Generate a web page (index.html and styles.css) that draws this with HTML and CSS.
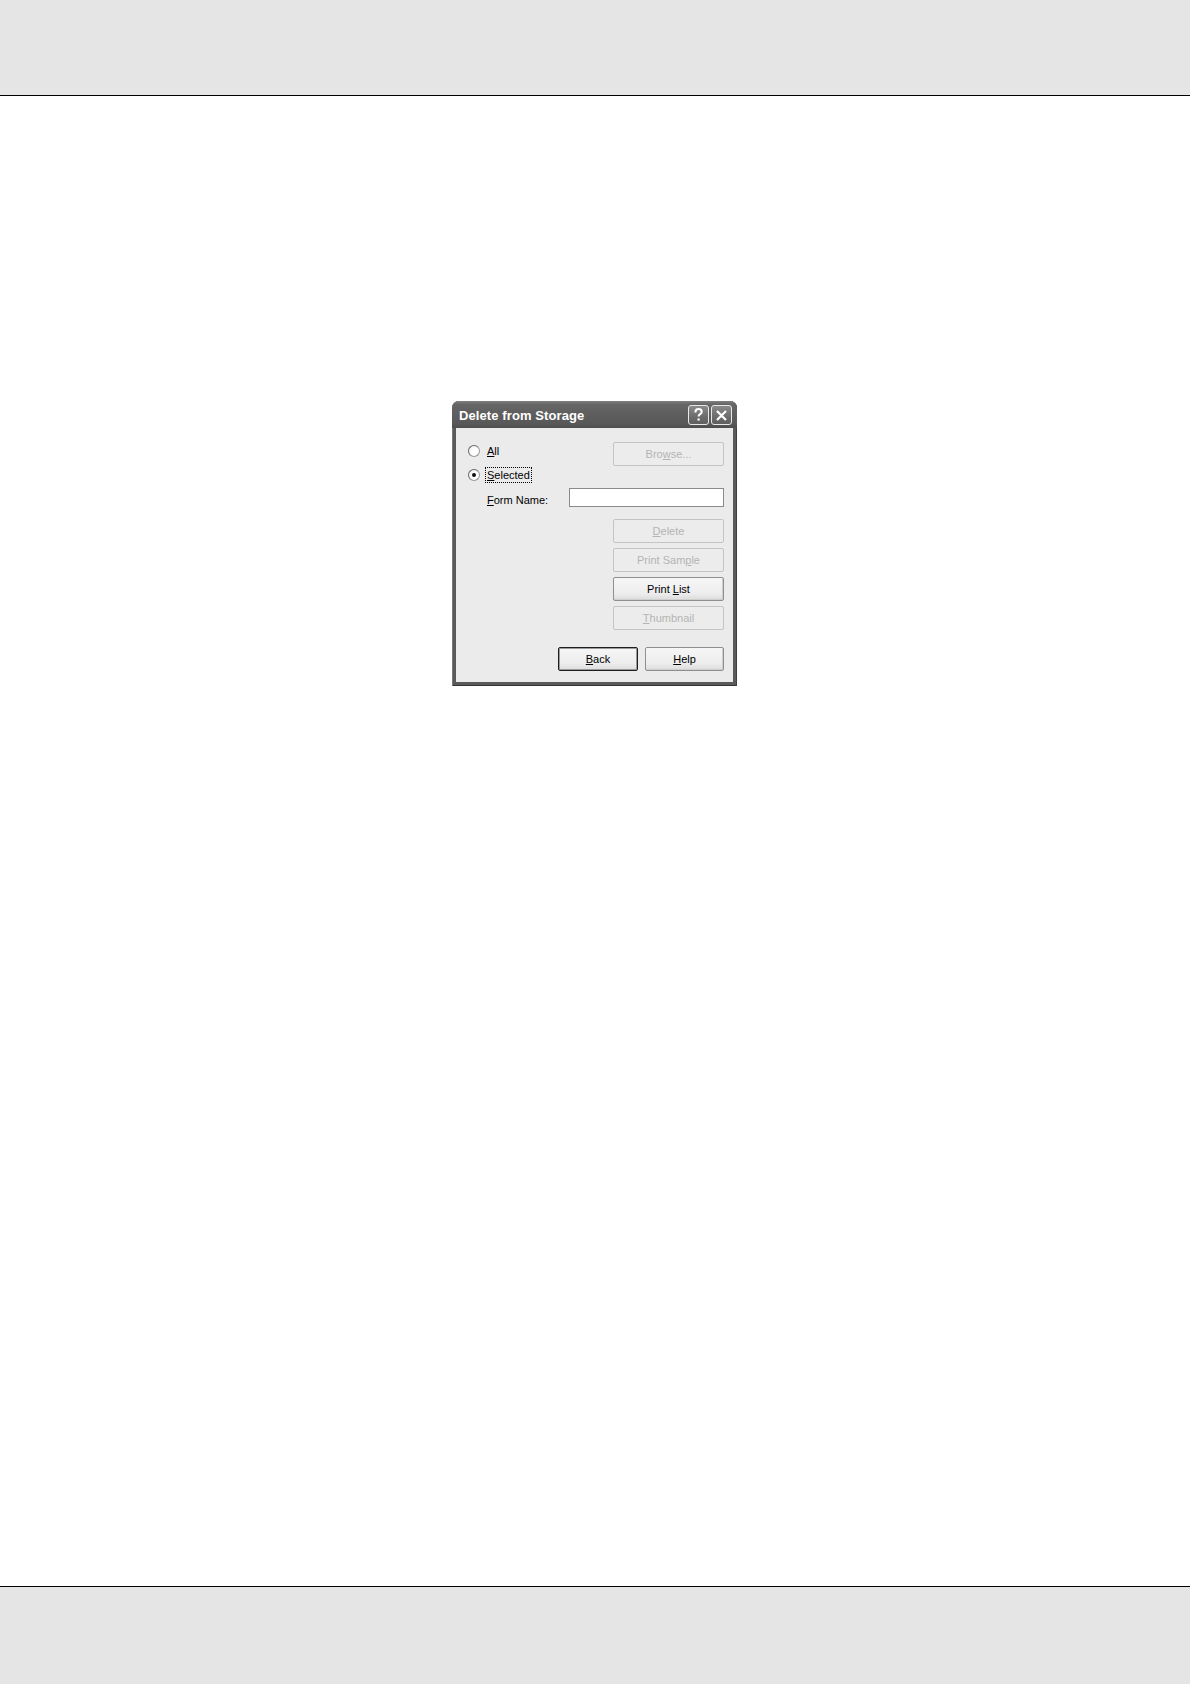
FILE: index.html
```html
<!DOCTYPE html>
<html>
<head>
<meta charset="utf-8">
<link rel="stylesheet" href="styles.css">
</head>
<body>
<div class="page">
  <header class="band top"></header>
  <main class="content">
    <div class="dialog">
      <div class="titlebar">
        <span class="title">Delete from Storage</span>
        <div class="tb-buttons">
          <span class="tb-btn">
            <svg width="13" height="14" viewBox="0 0 13 14"><path d="M3.4 4.4 C3.4 2.1 4.9 1 6.6 1 C8.5 1 9.7 2.2 9.7 3.7 C9.7 5.1 8.8 5.7 7.8 6.3 C7 6.8 6.6 7.3 6.6 8.6" fill="none" stroke="#fff" stroke-width="2"/><rect x="5.5" y="10.4" width="2.2" height="2.2" fill="#fff"/></svg>
          </span>
          <span class="tb-btn">
            <svg width="13" height="13" viewBox="0 0 13 13"><path d="M2 2 L11 11 M11 2 L2 11" stroke="#fff" stroke-width="2.2"/></svg>
          </span>
        </div>
      </div>
      <div class="body">
        <div class="row row-a">
          <label class="radio"><span class="circle"></span><span><u>A</u>ll</span></label>
          <span class="btn disabled"><span>Bro<u>w</u>se...</span></span>
        </div>
        <div class="row row-b">
          <label class="radio"><span class="circle on"></span><span class="focus"><u>S</u>elected</span></label>
        </div>
        <div class="row row-c">
          <span class="field-label"><u>F</u>orm Name:</span>
          <span class="textbox"></span>
        </div>
        <div class="btn-col">
          <span class="btn disabled"><span><u>D</u>elete</span></span>
          <span class="btn disabled"><span>Print Sam<u>p</u>le</span></span>
          <span class="btn"><span>Print <u>L</u>ist</span></span>
          <span class="btn disabled"><span><u>T</u>humbnail</span></span>
        </div>
        <div class="row row-d">
          <span class="btn default"><span><u>B</u>ack</span></span>
          <span class="btn help"><span><u>H</u>elp</span></span>
        </div>
      </div>
    </div>
  </main>
  <footer class="band bottom"></footer>
</div>
</body>
</html>
```

FILE: styles.css
```css
html, body {
  margin: 0;
  padding: 0;
  background: #ffffff;
}

.page {
  width: 1190px;
  height: 1684px;
  display: flex;
  flex-direction: column;
  font-family: "Liberation Sans", Arial, sans-serif;
}

.band {
  background: #e5e5e5;
  flex: none;
}

.band.top {
  height: 95px;
  border-bottom: 1.5px solid #000;
}

.band.bottom {
  height: 97px;
  border-top: 1.5px solid #000;
}

.content {
  flex: 1;
  padding: 305px 0 0 452px;
}

.dialog {
  width: 285px;
  height: 285px;
  box-sizing: border-box;
  background: #5a5a5a;
  border-radius: 7px 7px 0 0;
  display: flex;
  flex-direction: column;
  padding: 0 4px 4px 4px;
  box-shadow: inset 1px 0 0 #777, inset -1px 0 0 #3e3e3e, inset 0 -1px 0 #333;
}

.titlebar {
  height: 27px;
  margin: 0 -4px;
  padding: 0 5px 0 7px;
  display: flex;
  align-items: center;
  justify-content: space-between;
  border-radius: 7px 7px 0 0;
  background: linear-gradient(#808080 0%, #666 12%, #5e5e5e 50%, #585858 85%, #4e4e4e 100%);
}

.title {
  color: #fff;
  font-weight: bold;
  font-size: 13px;
  letter-spacing: 0.1px;
  margin-top: 1px;
}

.tb-buttons {
  display: flex;
  gap: 2px;
  margin-top: 1px;
}

.tb-btn {
  width: 21px;
  height: 20px;
  box-sizing: border-box;
  border: 1px solid #e8e8e8;
  border-radius: 3px;
  background: linear-gradient(#8a8a8a, #6c6c6c 60%, #5f5f5f);
  display: flex;
  align-items: center;
  justify-content: center;
}

.body {
  flex: 1;
  background: #ebebeb;
  padding: 14px 9px 0 12px;
  display: flex;
  flex-direction: column;
  font-size: 11px;
  color: #000;
}

.row {
  display: flex;
  align-items: center;
}

.row-a {
  height: 23px;
  justify-content: space-between;
}

.row-b {
  margin-top: 1px;
  height: 17px;
}

.row-c {
  margin-top: 5px;
  height: 19px;
  padding-left: 19px;
  justify-content: space-between;
}

.radio {
  display: flex;
  align-items: center;
  gap: 7px;
}

.row-a .radio {
  margin-top: -6px;
}

.circle {
  width: 12px;
  height: 12px;
  box-sizing: border-box;
  border-radius: 50%;
  border: 1px solid #9a9a9a;
  border-left-color: #6a6a6a;
  border-top-color: #6a6a6a;
  background: radial-gradient(circle at 65% 65%, #fff 40%, #e6e6e6 100%);
  display: flex;
  align-items: center;
  justify-content: center;
}

.circle.on::after {
  content: "";
  width: 4px;
  height: 4px;
  border-radius: 50%;
  background: #111;
}

.focus {
  outline: 1px dotted #000;
  outline-offset: 1px;
}

.field-label {
  margin-top: 4px;
}

.textbox {
  width: 155px;
  height: 19px;
  box-sizing: border-box;
  background: #fff;
  border: 1px solid #8a8a8a;
}

.btn {
  width: 111px;
  height: 24px;
  box-sizing: border-box;
  display: flex;
  align-items: center;
  justify-content: center;
  border: 1px solid #8f8f8f;
  border-radius: 2px;
  background: linear-gradient(#f6f6f6, #ededed 70%, #dcdcdc);
  box-shadow: inset -1px -1px 0 #cfcfcf;
  color: #000;
  font-size: 11px;
}

.btn.disabled {
  color: #b4b4b4;
  border-color: #c4c4c4;
  background: #ececec;
  box-shadow: none;
}

.btn-col {
  margin-top: 12px;
  align-self: flex-end;
  display: flex;
  flex-direction: column;
  gap: 5px;
}

.row-d {
  margin-top: 17px;
  justify-content: flex-end;
  gap: 7px;
}

.row-d .btn {
  width: 80px;
}

.row-d .btn.help {
  width: 79px;
}

.btn.default {
  border: 1px solid #1e1e1e;
  box-shadow: inset 0 0 0 1px #9a9a9a;
}

u {
  text-decoration: underline;
  text-underline-offset: 1px;
}
```
